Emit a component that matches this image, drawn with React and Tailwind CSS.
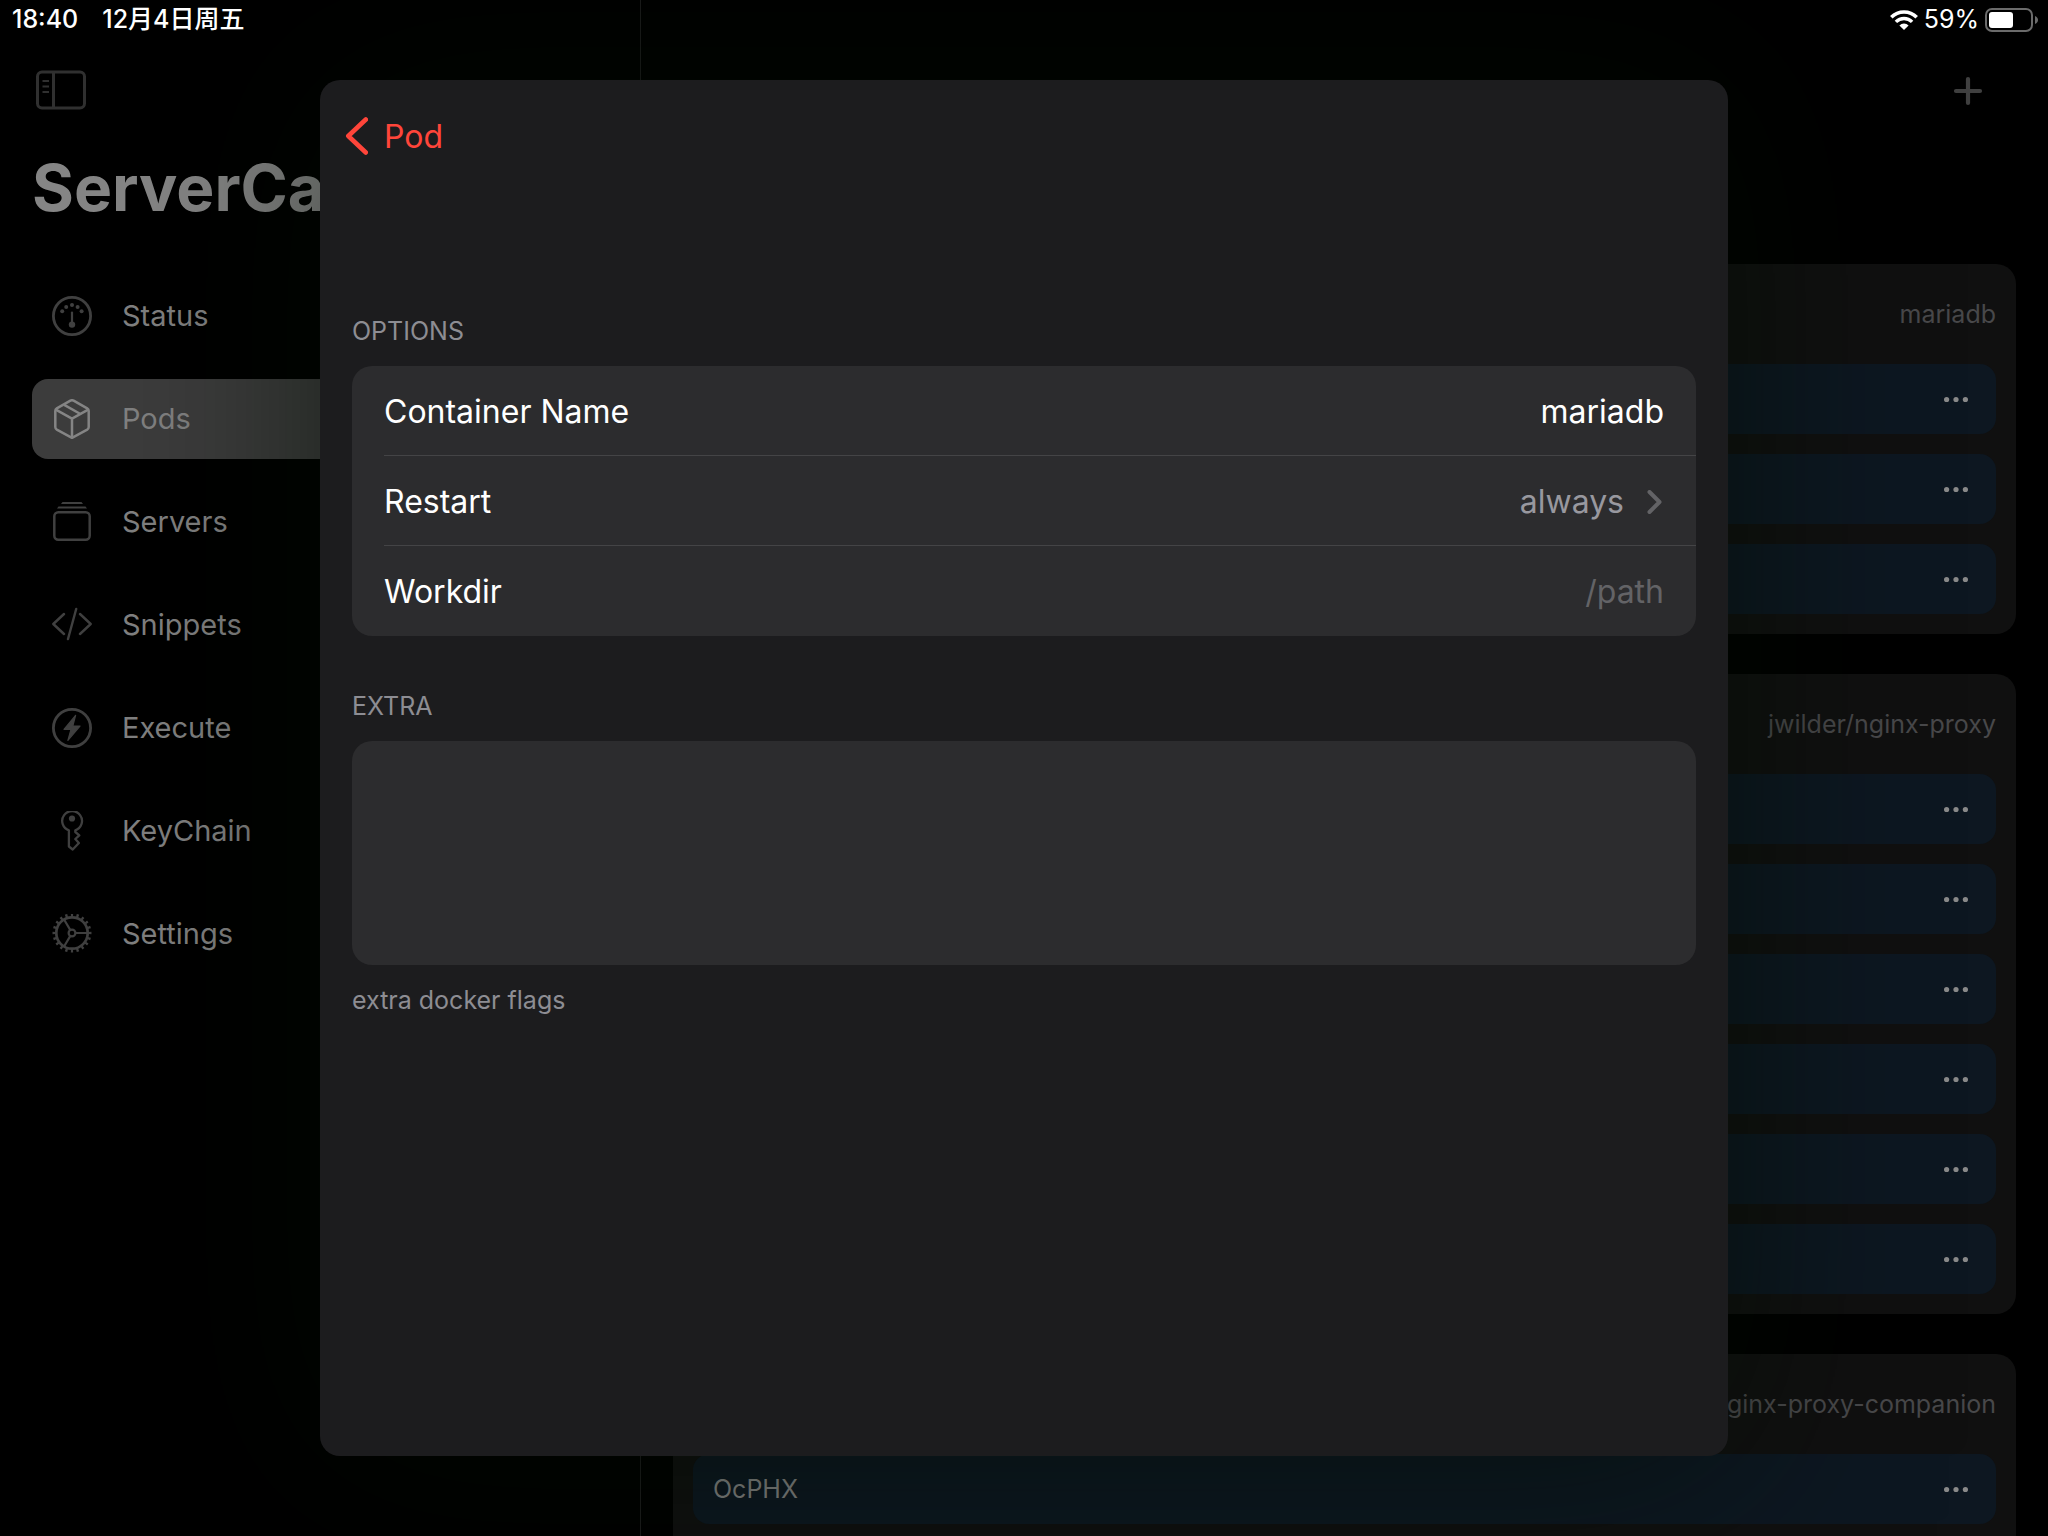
// App.jsx
const NAV = [
  { id: "status", label: "Status", Icon: GaugeIcon },
  { id: "pods", label: "Pods", Icon: BoxIcon },
  { id: "servers", label: "Servers", Icon: StackIcon },
  { id: "snippets", label: "Snippets", Icon: CodeIcon },
  { id: "execute", label: "Execute", Icon: BoltIcon },
  { id: "keychain", label: "KeyChain", Icon: KeyIcon },
  { id: "settings", label: "Settings", Icon: GearIcon },
];

const PODS = [
  { image: "mariadb", containers: ["", "", ""] },
  { image: "jwilder/nginx-proxy", containers: ["", "", "", "", "", ""] },
  { image: "nginx-proxy-companion", containers: ["OcPHX", ""] },
];

function GaugeIcon() {
  return (
    <svg width="40" height="40" viewBox="0 0 40 40" fill="currentColor">
      <circle cx="20" cy="20" r="18.6" fill="none" stroke="currentColor" strokeWidth="2.8" />
      <circle cx="10.2" cy="15.2" r="2" />
      <circle cx="14.2" cy="11" r="2" />
      <circle cx="20" cy="9" r="2" />
      <circle cx="25.6" cy="11" r="2" />
      <circle cx="29.6" cy="15.2" r="2" />
      <path d="M20 16.5v10" stroke="currentColor" strokeWidth="2.2" strokeLinecap="round" />
      <circle cx="20" cy="28.6" r="3.2" />
    </svg>
  );
}

function BoxIcon() {
  return (
    <svg width="40" height="40" viewBox="0 0 40 40" fill="none" stroke="currentColor" strokeWidth="2.5" strokeLinejoin="round">
      <path d="M18.4 1.7a3.2 3.2 0 0 1 3.2 0l13.6 7.6a3 3 0 0 1 1.5 2.6v16.2a3 3 0 0 1-1.5 2.6L20 38.8 4.8 30.7a3 3 0 0 1-1.5-2.6V11.9a3 3 0 0 1 1.5-2.6z" />
      <path d="M3.8 10.6 20 19.7l16.2-9.1M20 19.7v18.6M12.2 5.8l16.2 9.2" />
    </svg>
  );
}

function StackIcon() {
  return (
    <svg width="40" height="40" viewBox="0 0 40 40" fill="none" stroke="currentColor" strokeWidth="2.5">
      <rect x="2.3" y="10.3" width="35.4" height="27.4" rx="4" />
      <path d="M5 6.6 6.5 4.4h27L35 6.600z" fill="currentColor" stroke="none" />
      <path d="M9 2 10.500 0h19L31 2z" fill="currentColor" stroke="none" />
    </svg>
  );
}

function CodeIcon() {
  return (
    <svg width="40" height="40" viewBox="0 0 40 40" fill="none" stroke="currentColor" strokeWidth="2.4" strokeLinecap="round" strokeLinejoin="round">
      <path d="M12 9 1.300 19 12 29M28 9l10.700 10L28 29M24.200 4 16 34" />
    </svg>
  );
}

function BoltIcon() {
  return (
    <svg width="40" height="40" viewBox="0 0 40 40" fill="currentColor">
      <circle cx="20" cy="20" r="18.6" fill="none" stroke="currentColor" strokeWidth="2.8" />
      <path d="M23.6 7.4 12 21.3h7l-3.1 11L28 18h-7.2z" stroke="currentColor" strokeWidth="1.2" strokeLinejoin="round" />
    </svg>
  );
}

function KeyIcon() {
  return (
    <svg width="40" height="40" viewBox="0 0 40 40" fill="none" stroke="currentColor" strokeWidth="2.3" strokeLinejoin="round">
      <path d="M16.900 19.300a9.900 9.900 0 1 1 6.400 0v1.700l4 3.400-4 3.600 3.600 4-6.200 6.500-3.800-3z" />
      <circle cx="20" cy="7.5" r="3.1" fill="currentColor" stroke="none" />
    </svg>
  );
}

function GearIcon() {
  return (
    <svg width="40" height="40" viewBox="0 0 40 40" fill="none" stroke="currentColor">
      <circle cx="20" cy="19" r="15.7" strokeWidth="2.7" />
      <circle cx="20" cy="19" r="18" strokeWidth="3" pathLength="40" strokeDasharray="0.8 1.2" strokeDashoffset="0.4" />
      <circle cx="20" cy="19" r="3.4" strokeWidth="2.2" />
      <path d="M23.5 19H35M18.2 15.9l-6-10.1M18.200 22.100l-6 10.100" strokeWidth="2.2" />
    </svg>
  );
}

const StatusBar = () => (
  <div className="absolute inset-x-0 top-0 flex h-10 items-center justify-between pr-2.5 pl-3 text-[25px] font-medium text-white">
    <div className="flex gap-6">
      <span>18:40</span>
      <span>12月4日周五</span>
    </div>
    <div className="flex items-center gap-1.5 font-normal">
      <svg width="28" height="20" viewBox="0 0 28 20" fill="none" stroke="white">
        <path d="M1.3 7.3a18 18 0 0 1 25.4 0" strokeWidth="3.6" />
        <path d="M5.9 11.9a11.5 11.5 0 0 1 16.2 0" strokeWidth="3.4" />
        <path d="M14 20 9.4 15.4a6.5 6.5 0 0 1 9.2 0z" fill="white" stroke="none" />
      </svg>
      <span>59%</span>
      <svg width="53" height="24" viewBox="0 0 53 24">
        <rect x="1" y="1" width="46" height="22" rx="6" fill="none" stroke="#6b6b6b" strokeWidth="2" />
        <rect x="4" y="4" width="24" height="16" rx="3" fill="white" />
        <path d="M50 8c4 1.5 4 6.5 0 8z" fill="#6b6b6b" />
      </svg>
    </div>
  </div>
);

const Sidebar = () => (
  <aside className="flex w-[641px] shrink-0 flex-col border-r border-[#1c1c1c] px-8 pt-[66px]">
    <button aria-label="Toggle sidebar" className="ml-1 flex h-12 w-fit items-center text-[#303030]">
      <svg width="50" height="40" viewBox="0 0 50 40" fill="none" stroke="currentColor" strokeWidth="3">
        <rect x="1.5" y="2" width="47" height="36" rx="4.5" />
        <path d="M17.5 2v36" />
        <path d="M6.5 11H13M6.5 16.5H13M6.5 22H13" strokeWidth="2" />
      </svg>
    </button>
    <h1 className="mt-[34px] text-[64px] leading-20 font-bold text-[#858585]">ServerCat</h1>
    <nav className="mt-12 flex flex-col gap-[23px]">
      {NAV.map(({ id, label, Icon }) => (
        <a
          key={id}
          href={`#${id}`}
          className={
            id === "pods"
              ? "flex h-20 items-center gap-[30px] rounded-2xl bg-[#3c3c3c] px-5 text-[#858585]"
              : "flex h-20 items-center gap-[30px] rounded-2xl px-5 text-[#404040]"
          }
        >
          <Icon />
          <span className="text-[29px] leading-10 text-[#808080]">{label}</span>
        </a>
      ))}
    </nav>
  </aside>
);

const PodCard = ({ image, containers }) => (
  <section className="rounded-[20px] bg-[#101010] px-5 pb-5">
    <h2 className="flex h-25 items-center justify-end pt-0.5 text-[25px] text-[#48484a]">{image}</h2>
    <ul className="flex flex-col gap-5">
      {containers.map((name, i) => (
        <li key={i} className="flex h-[70px] items-center justify-between rounded-2xl bg-[#0d1721] pr-7 pl-5">
          <span className="pt-0.5 text-[25px] text-[#808080]">{name}</span>
          <button aria-label="More" className="text-[#8a8a8a]">
            <svg width="24" height="24" viewBox="0 0 24 24" fill="currentColor">
              <circle cx="2.6" cy="12.5" r="2.6" />
              <circle cx="12" cy="12.5" r="2.6" />
              <circle cx="21.4" cy="12.5" r="2.6" />
            </svg>
          </button>
        </li>
      ))}
    </ul>
  </section>
);

const OptionsSheet = () => (
  <div role="dialog" aria-label="Options" className="h-full w-full max-w-[1408px] rounded-[20px] bg-[#1c1c1e] shadow-[0_0_200px_rgba(2,14,0,0.6)]">
    <header className="flex h-28 items-center px-6">
      <button className="flex items-center gap-4 text-[32px] text-[#ff453a]">
        <svg width="24" height="40" viewBox="0 0 24 40" fill="none" stroke="currentColor" strokeWidth="4.6" strokeLinecap="round" strokeLinejoin="round">
          <path d="M21.8 3.5 4.3 20l17.5 16.5" />
        </svg>
        <span className="pt-0.5">Pod</span>
      </button>
    </header>
    <form className="px-8 pt-[123px] text-[32px] text-white">
      <h2 className="text-[25px] leading-8 text-[#8d8d93]">OPTIONS</h2>
      <div className="mt-[19px] rounded-[20px] bg-[#2c2c2e] pl-8">
        <div className="flex h-[90px] items-center border-b border-[#444446] pt-0.5 pr-8">
          <label htmlFor="name">Container Name</label>
          <input id="name" type="text" defaultValue="mariadb" className="min-w-0 flex-1 bg-transparent text-right outline-none" />
        </div>
        <button type="button" className="flex h-[90px] w-full items-center border-b border-[#444446] pt-0.5 pr-8">
          <span className="flex-1 text-left">Restart</span>
          <span className="text-[#98989f]">always</span>
          <svg className="ml-5" width="20" height="24" viewBox="0 0 20 24" fill="none" stroke="#636366" strokeWidth="4" strokeLinecap="round" strokeLinejoin="round">
            <path d="M5.500 2 15.500 12l-10 10" />
          </svg>
        </button>
        <div className="flex h-[90px] items-center pt-0.5 pr-8">
          <label htmlFor="workdir">Workdir</label>
          <input id="workdir" type="text" placeholder="/path" className="min-w-0 flex-1 bg-transparent text-right outline-none placeholder:text-[#636366]" />
        </div>
      </div>
      <label htmlFor="extra" className="mt-[54px] block text-[25px] leading-8 text-[#8d8d93]">EXTRA</label>
      <textarea id="extra" className="mt-[19px] block h-56 w-full resize-none rounded-[20px] bg-[#2c2c2e] px-8 py-5 outline-none" />
      <p className="mt-[19px] text-[25px] leading-8 text-[#8d8d93]">extra docker flags</p>
    </form>
  </div>
);

export default function App() {
  return (
    <div className="relative flex h-screen overflow-hidden bg-black font-['Inter','Noto_Sans_CJK_SC',sans-serif]">
      <Sidebar />
      <main className="min-w-0 flex-1 px-8 pt-[67px]">
        <div className="flex h-12 items-center justify-end pr-8">
          <button aria-label="Add" className="text-[#404040]">
            <svg width="32" height="32" viewBox="0 0 32 32" fill="none" stroke="currentColor" strokeWidth="4.2" strokeLinecap="round">
              <path d="M16 4v24M4 16h24" />
            </svg>
          </button>
        </div>
        <div className="mt-[149px] flex flex-col gap-10">
          {PODS.map((pod) => (
            <PodCard key={pod.image} {...pod} />
          ))}
        </div>
      </main>
      <div className="absolute inset-0 flex justify-center py-20">
        <OptionsSheet />
      </div>
      <StatusBar />
    </div>
  );
}
